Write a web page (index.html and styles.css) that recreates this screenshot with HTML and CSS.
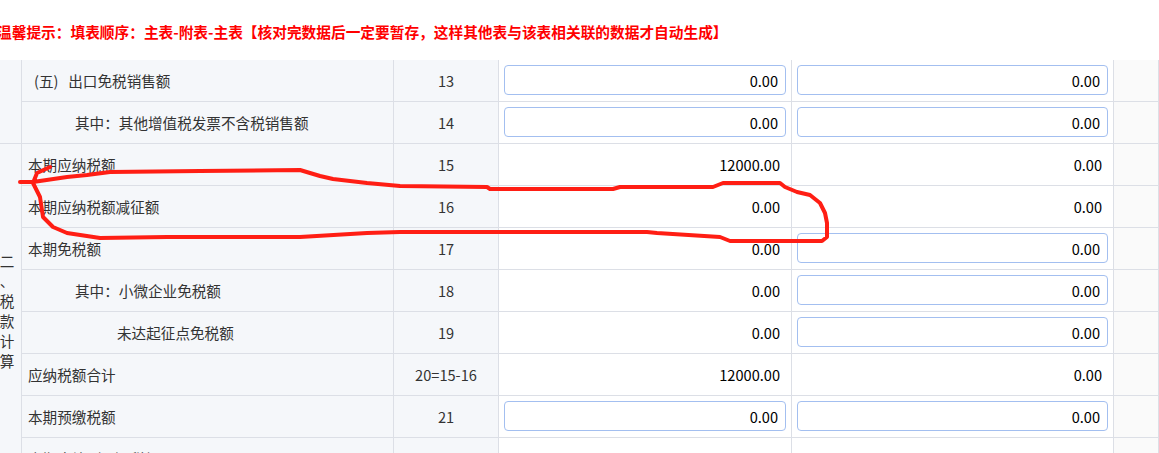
FILE: index.html
```html
<!DOCTYPE html>
<html lang="zh-CN">
<head>
    <meta charset="UTF-8">
    <title>增值税及附加税费申报表</title>
    <link rel="stylesheet" href="styles.css">
</head>
<body>
    <div class="page">
        <div class="tip">温馨提示：填表顺序：主表-附表-主表【核对完数据后一定要暂存，这样其他表与该表相关联的数据才自动生成】</div>

        <table class="report">
            <colgroup>
                <col class="c-sec">
                <col class="c-item">
                <col class="c-no">
                <col class="c-val">
                <col class="c-val2">
                <col class="c-end">
            </colgroup>
            <tr>
                <td class="sec" rowspan="2"></td>
                <td class="item ind1">(五)&nbsp;&nbsp;&nbsp;出口免税销售额</td>
                <td class="no">13</td>
                <td class="val"><input type="text" value="0.00"></td>
                <td class="val"><input type="text" value="0.00"></td>
                <td class="end"></td>
            </tr>
            <tr>
                <td class="item ind2">其中：其他增值税发票不含税销售额</td>
                <td class="no">14</td>
                <td class="val"><input type="text" value="0.00"></td>
                <td class="val"><input type="text" value="0.00"></td>
                <td class="end"></td>
            </tr>
            <tr>
                <td class="sec" rowspan="8"><div class="sec-text">二、税款计算</div></td>
                <td class="item">本期应纳税额</td>
                <td class="no">15</td>
                <td class="num">12000.00</td>
                <td class="num">0.00</td>
                <td class="end"></td>
            </tr>
            <tr>
                <td class="item">本期应纳税额减征额</td>
                <td class="no">16</td>
                <td class="num">0.00</td>
                <td class="num">0.00</td>
                <td class="end"></td>
            </tr>
            <tr>
                <td class="item">本期免税额</td>
                <td class="no">17</td>
                <td class="num">0.00</td>
                <td class="val"><input type="text" value="0.00"></td>
                <td class="end"></td>
            </tr>
            <tr>
                <td class="item ind2">其中：小微企业免税额</td>
                <td class="no">18</td>
                <td class="num">0.00</td>
                <td class="val"><input type="text" value="0.00"></td>
                <td class="end"></td>
            </tr>
            <tr>
                <td class="item ind3">未达起征点免税额</td>
                <td class="no">19</td>
                <td class="num">0.00</td>
                <td class="val"><input type="text" value="0.00"></td>
                <td class="end"></td>
            </tr>
            <tr>
                <td class="item">应纳税额合计</td>
                <td class="no">20=15-16</td>
                <td class="num">12000.00</td>
                <td class="num">0.00</td>
                <td class="end"></td>
            </tr>
            <tr>
                <td class="item">本期预缴税额</td>
                <td class="no">21</td>
                <td class="val"><input type="text" value="0.00"></td>
                <td class="val"><input type="text" value="0.00"></td>
                <td class="end"></td>
            </tr>
            <tr>
                <td class="item">本期应补（退）税额</td>
                <td class="no">22</td>
                <td class="num">12000.00</td>
                <td class="num">0.00</td>
                <td class="end"></td>
            </tr>
        </table>
    </div>

    <!-- hand-drawn red mark around line 16 -->
    <svg class="mark" width="1159" height="453" viewBox="0 0 1159 453">
        <path d="M20,182 L33,182 L67,177 L87,175 L110,172 L200,171 L300,170 L320,176 L333,179 L367,183 L400,186 L487,187 L490,189 L613,189 L620,187 L713,187 L723,183 L780,183 L785,187 L797,192 L810,195 L820,203 L825,213 L827,223 L827,237 L822,241 L730,241 L720,237 L657,233 L647,232 L400,232 L367,233 L300,237 L200,237 L167,237 L100,238 L67,233 L53,227 L43,217 L40,197 L33,183 L37,173 L50,167"
              fill="none" stroke="#ff1e14" stroke-width="4" stroke-linecap="round" stroke-linejoin="round"/>
    </svg>
</body>
</html>
```

FILE: styles.css
```css
body {
    margin: 0;
    position: relative;
    overflow: hidden;
    background: #fff;
    font-family: "Noto Sans CJK SC", "Noto Sans", sans-serif;
    font-size: 14.6px;
    color: #333;
}
.page {
    margin-left: -8px;
}
.tip {
    height: 60px;
    box-sizing: border-box;
    padding: 22px 0 0 5px;
    line-height: 20px;
    font-size: 14.7px;
    font-weight: bold;
    color: #ff0000;
    white-space: nowrap;
}
.report {
    width: 1167px;
    table-layout: fixed;
    border-collapse: collapse;
}
.c-sec { width: 29px; }
.c-item { width: 372px; }
.c-no { width: 105px; }
.c-val { width: 293px; }
.c-val2 { width: 322px; }
.report td {
    height: 42px;
    box-sizing: border-box;
    padding: 0 6px;
    border: 1px solid #dcdfe6;
    white-space: nowrap;
}
.report tr:first-child td {
    border-top: none;
    height: 41px;
}
.sec {
    background: #f5f7fa;
    text-align: center;
    vertical-align: middle;
}
.report td.sec {
    padding: 0;
}
.sec-text {
    width: 15px;
    margin: 0 auto;
    line-height: 20px;
    white-space: normal;
    word-break: break-all;
    line-break: anywhere;
}
.item {
    background: #f5f7fa;
}
.ind1 { padding-left: 12px !important; }
.ind2 { padding-left: 53px !important; }
.ind3 { padding-left: 95px !important; }
.no {
    background: #f5f7fa;
    text-align: center;
}
.report td.val {
    padding: 0 5px;
}
.report td.num {
    padding-right: 11px;
    text-align: right;
    color: #000;
}
.end {
    background: #fafafa;
}
input {
    display: block;
    width: 100%;
    height: 30px;
    box-sizing: border-box;
    padding: 0 7px;
    border: 1px solid #a3bff0;
    border-radius: 4px;
    background: #fff;
    font-family: "Noto Sans CJK SC", "Noto Sans", sans-serif;
    font-size: 14.6px;
    color: #000;
    text-align: right;
    outline: none;
}
.mark {
    position: absolute;
    top: 0;
    left: 0;
    pointer-events: none;
}
```
